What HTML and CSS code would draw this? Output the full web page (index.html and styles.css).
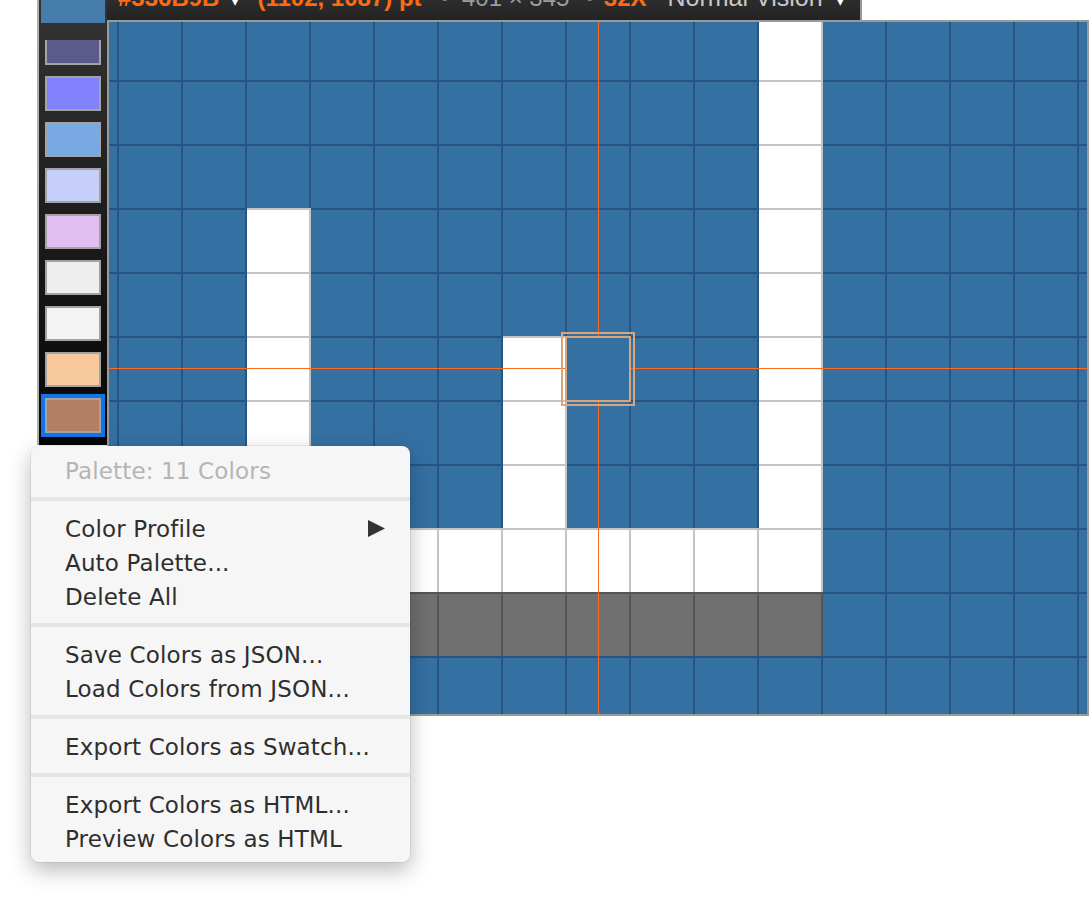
FILE: index.html
```html
<!DOCTYPE html>
<html>
<head>
<meta charset="utf-8">
<link rel="stylesheet" href="styles.css">
</head>
<body>
<div class="app">
  <aside class="sidebar">
    <div class="current"></div>
    <div class="sw cut" style="background:#5c5a8a"></div>
    <div class="sw" style="background:#8382fd"></div>
    <div class="sw" style="background:#78a9e2"></div>
    <div class="sw" style="background:#c6cff9"></div>
    <div class="sw" style="background:#e2bdf0"></div>
    <div class="sw" style="background:#eeeeee"></div>
    <div class="sw" style="background:#f3f3f3"></div>
    <div class="sw" style="background:#f8c99c"></div>
    <div class="sw sel" style="background:#b47e62"></div>
  </aside>
  <main class="main">
    <div class="topbar">
      <div class="status">
        <span class="hex">#336B9B</span><span class="caret">▾</span><span class="coord">(1102, 1087) pt</span><span class="dot">•</span><span class="size">401 × 345</span><span class="dot dot2">•</span><span class="zoom">32X</span><span class="vision">Normal Vision</span><span class="caret caret2">▾</span>
      </div>
    </div>
    <div class="canvas">
      <div class="grid">
        <i></i><i></i><i></i><i></i><i></i><i></i><i></i><i></i><i></i><i></i><i></i><i class="w"></i><i></i><i></i><i></i><i></i><i></i>
        <i></i><i></i><i></i><i></i><i></i><i></i><i></i><i></i><i></i><i></i><i></i><i class="w"></i><i></i><i></i><i></i><i></i><i></i>
        <i></i><i></i><i></i><i></i><i></i><i></i><i></i><i></i><i></i><i></i><i></i><i class="w"></i><i></i><i></i><i></i><i></i><i></i>
        <i></i><i></i><i></i><i class="w"></i><i></i><i></i><i></i><i></i><i></i><i></i><i></i><i class="w"></i><i></i><i></i><i></i><i></i><i></i>
        <i></i><i></i><i></i><i class="w"></i><i></i><i></i><i></i><i></i><i></i><i></i><i></i><i class="w"></i><i></i><i></i><i></i><i></i><i></i>
        <i></i><i></i><i></i><i class="w"></i><i></i><i></i><i></i><i class="w"></i><i></i><i></i><i></i><i class="w"></i><i></i><i></i><i></i><i></i><i></i>
        <i></i><i></i><i></i><i class="w"></i><i></i><i></i><i></i><i class="w"></i><i></i><i></i><i></i><i class="w"></i><i></i><i></i><i></i><i></i><i></i>
        <i></i><i></i><i></i><i class="w"></i><i></i><i></i><i></i><i class="w"></i><i></i><i></i><i></i><i class="w"></i><i></i><i></i><i></i><i></i><i></i>
        <i></i><i></i><i></i><i class="w"></i><i class="w"></i><i class="w"></i><i class="w"></i><i class="w"></i><i class="w"></i><i class="w"></i><i class="w"></i><i class="w"></i><i></i><i></i><i></i><i></i><i></i>
        <i></i><i></i><i></i><i class="g"></i><i class="g"></i><i class="g"></i><i class="g"></i><i class="g"></i><i class="g"></i><i class="g"></i><i class="g"></i><i class="g"></i><i></i><i></i><i></i><i></i><i></i>
        <i></i><i></i><i></i><i></i><i></i><i></i><i></i><i></i><i></i><i></i><i></i><i></i><i></i><i></i><i></i><i></i><i></i>
      </div>
      <div class="vline"></div>
      <div class="hline"></div>
      <div class="loupe"><div class="loupe-in"></div></div>
    </div>
  </main>
</div>

<div class="menu">
  <div class="mi head">Palette: 11 Colors</div>
  <div class="sep"></div>
  <div class="mi sub"><span>Color Profile</span><svg class="arrow" width="17" height="17" viewBox="0 0 17 17"><polygon points="0,0 17,8.5 0,17" fill="#333"/></svg></div>
  <div class="mi">Auto Palette...</div>
  <div class="mi">Delete All</div>
  <div class="sep"></div>
  <div class="mi">Save Colors as JSON...</div>
  <div class="mi">Load Colors from JSON...</div>
  <div class="sep"></div>
  <div class="mi">Export Colors as Swatch...</div>
  <div class="sep"></div>
  <div class="mi">Export Colors as HTML...</div>
  <div class="mi">Preview Colors as HTML</div>
</div>
</body>
</html>
```

FILE: styles.css
```css
html, body {
  margin: 0;
  padding: 0;
  background: #ffffff;
}

.app {
  display: flex;
  align-items: flex-start;
  padding-left: 37px;
}

/* ---------- sidebar ---------- */
.sidebar {
  width: 70px;
  height: 445px;
  box-sizing: border-box;
  border-left: 2px solid #b0b0b0;
  background: linear-gradient(#343434, #050505);
  display: flex;
  flex-direction: column;
  align-items: center;
  flex: none;
}

.current {
  width: 64px;
  height: 23px;
  background: #467dab;
  flex: none;
}

.sw {
  width: 56px;
  height: 35px;
  box-sizing: border-box;
  border: 2px solid #a3a3a3;
  margin-top: 11px;
  flex: none;
}

.sw.cut {
  height: 25px;
  border-top: 0;
  margin-top: 17px;
}

.sw.sel {
  outline: 4px solid #1474e6;
}

/* ---------- main ---------- */
.main {
  display: flex;
  flex-direction: column;
  flex: none;
}

.topbar {
  width: 755px;
  height: 20px;
  box-sizing: border-box;
  border-right: 2px solid #999999;
  background: linear-gradient(#2d2d2d, #232323);
  overflow: hidden;
}

.status {
  display: flex;
  align-items: baseline;
  margin-top: -15px;
  padding-left: 11px;
  font: 24px/24px "Liberation Sans", Arial, sans-serif;
  white-space: nowrap;
}

.hex, .coord, .zoom {
  color: #ff6a12;
  font-weight: bold;
}

.caret {
  color: #ffffff;
  font: 14px/24px "DejaVu Sans", sans-serif;
  margin-left: 12px;
}

.coord { margin-left: 19px; }

.dot {
  color: #8a8a8a;
  margin-left: 19px;
}

.dot2 { margin-left: 16px; }

.size {
  color: #9c9c9c;
  margin-left: 13px;
}

.zoom { margin-left: 10px; }

.vision {
  color: #c8c8c8;
  font-size: 25px;
  margin-left: 21px;
}

.caret2 { margin-left: 14px; }

/* ---------- canvas ---------- */
.canvas {
  position: relative;
  border: 2px solid #9a9a9a;
  overflow: hidden;
}

.grid {
  display: grid;
  grid-template-columns: 10px repeat(15, 64px) 8px;
  grid-template-rows: 58px repeat(9, 64px) 58px;
  background: #3570a3;
}

.grid i {
  display: block;
  background: #3570a3;
  border-top: 2px solid #28557f;
  border-right: 2px solid #28557f;
}

.grid i.w {
  background: #ffffff;
  border-color: #c3c3c3;
}

.grid i.g {
  background: #707070;
  border-color: #555555;
}

.grid i:nth-child(-n+17) { border-top: 0; }
.grid i:nth-child(17n) { border-right: 0; }

.vline {
  position: absolute;
  left: 489px;
  top: 0;
  bottom: 0;
  width: 1px;
  background: #ff6a1a;
}

.hline {
  position: absolute;
  left: 0;
  right: 0;
  top: 346px;
  height: 1px;
  background: #ff6a1a;
}

.loupe {
  position: absolute;
  left: 452px;
  top: 310px;
  width: 74px;
  height: 74px;
  box-sizing: border-box;
  border: 2px solid #d9a57b;
  padding: 2px;
}

.loupe-in {
  height: 100%;
  box-sizing: border-box;
  border: 2px solid #d9a57b;
  background: #3570a3;
}

/* ---------- context menu ---------- */
.menu {
  position: absolute;
  left: 31px;
  top: 446px;
  width: 379px;
  padding: 8px 0 6px;
  background: #f6f6f6;
  border-radius: 8px;
  box-shadow: 0 8px 22px rgba(0, 0, 0, 0.28), 0 0 0 1px rgba(0, 0, 0, 0.05);
  font: 23px/34px "DejaVu Sans", sans-serif;
  letter-spacing: 0.15px;
  color: #2e2e2e;
}

.mi {
  height: 34px;
  padding: 0 25px 0 34px;
  white-space: nowrap;
}

.mi.head {
  color: #b5b5b5;
}

.mi.sub {
  display: flex;
  justify-content: space-between;
  align-items: center;
}

.arrow {
  display: block;
  margin-top: -1px;
}

.sep {
  height: 4px;
  background: #e5e5e5;
  margin: 9px 0 11px;
}
```
